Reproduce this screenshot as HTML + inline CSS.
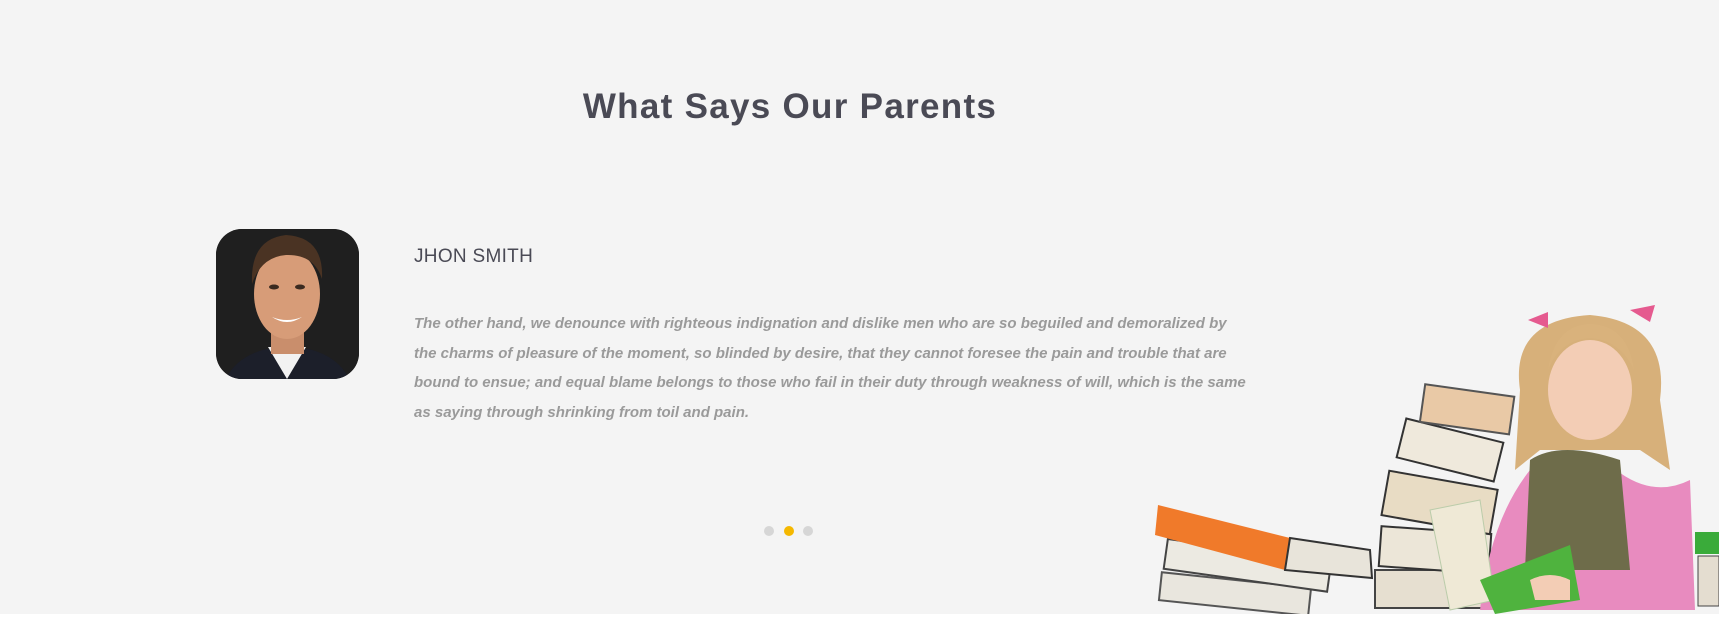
<!DOCTYPE html>
<html><head><style>
html,body{margin:0;padding:0}
body{width:1719px;height:625px;background:#f4f4f4;position:relative;overflow:hidden;font-family:"Liberation Sans",sans-serif}
.bottom{position:absolute;left:0;top:614px;width:1719px;height:11px;background:#fff}
h2{position:absolute;left:0;width:1580px;text-align:center;top:87px;margin:0;font-size:35px;font-weight:bold;color:#4a4a55;letter-spacing:1.3px}
.photo{position:absolute;left:216px;top:229px;width:143px;height:150px;border-radius:26px;background:#222;overflow:hidden}
.name{position:absolute;left:414px;top:246px;font-size:19px;color:#4a4a55;letter-spacing:.3px}
.txt{position:absolute;left:414px;top:309px;font-size:15px;font-style:italic;font-weight:bold;color:#9a9a9a;line-height:29.6px;white-space:nowrap}
.dot{position:absolute;top:526px;width:10px;height:10px;border-radius:50%;background:#d6d6d6}
</style></head><body>
<h2>What Says Our Parents</h2>
<div class="photo">
<svg width="143" height="150" viewBox="0 0 143 150">
<rect width="143" height="150" fill="#1f1f1f"/>
<path d="M10 150 Q20 128 50 120 L93 120 Q123 128 133 150Z" fill="#1c1f2a"/>
<path d="M52 118 L71 150 L90 118Z" fill="#f2f2f2"/>
<rect x="55" y="95" width="33" height="30" fill="#c98e6c"/>
<ellipse cx="71" cy="65" rx="33" ry="45" fill="#d79c78"/>
<path d="M36 55 Q34 10 70 6 Q108 8 106 50 Q98 25 70 26 Q45 28 36 55Z" fill="#4a3323"/>
<path d="M56 88 Q71 98 86 88 Q71 94 56 88Z" fill="#fff"/>
<ellipse cx="58" cy="58" rx="5" ry="2.5" fill="#3a2a20"/>
<ellipse cx="84" cy="58" rx="5" ry="2.5" fill="#3a2a20"/>
</svg>
</div>
<div class="name">JHON SMITH</div>
<div class="txt">The other hand, we denounce with righteous indignation and dislike men who are so beguiled and demoralized by<br>the charms of pleasure of the moment, so blinded by desire, that they cannot foresee the pain and trouble that are<br>bound to ensue; and equal blame belongs to those who fail in their duty through weakness of will, which is the same<br>as saying through shrinking from toil and pain.</div>
<div class="dot" style="left:764px"></div>
<div class="dot" style="left:784px;background:#f5b800"></div>
<div class="dot" style="left:803px"></div>
<svg style="position:absolute;left:1150px;top:300px" width="569" height="314" viewBox="0 0 569 314">
<rect x="10" y="280" width="150" height="28" fill="#e9e6de" stroke="#555" stroke-width="2" transform="rotate(6 85 294)"/>
<rect x="15" y="250" width="165" height="30" fill="#eceae2" stroke="#444" stroke-width="2" transform="rotate(8 95 265)"/>
<polygon points="8,205 140,238 135,270 5,235" fill="#f07a2a"/>
<polygon points="140,238 220,250 222,278 135,270" fill="#e8e4da" stroke="#333" stroke-width="2"/>
<rect x="225" y="270" width="110" height="38" fill="#e6dfd0" stroke="#444" stroke-width="2"/>
<rect x="230" y="230" width="110" height="40" fill="#ece6d8" stroke="#333" stroke-width="2" transform="rotate(4 285 250)"/>
<rect x="235" y="180" width="110" height="45" fill="#e8dcc4" stroke="#333" stroke-width="2" transform="rotate(10 290 200)"/>
<rect x="250" y="130" width="100" height="40" fill="#efe9dc" stroke="#333" stroke-width="2" transform="rotate(14 300 150)"/>
<rect x="272" y="90" width="90" height="38" fill="#e9c9a6" stroke="#555" stroke-width="2" transform="rotate(8 315 110)"/>
<path d="M330 310 Q340 220 380 170 L460 165 Q500 200 540 180 L545 310Z" fill="#e88bbf"/>
<path d="M380 160 Q410 140 470 160 L480 270 L375 270Z" fill="#6e6c4a"/>
<path d="M370 90 Q360 20 440 15 Q520 22 510 100 L520 170 L490 150 L390 150 L365 170Z" fill="#d7b07a"/>
<ellipse cx="440" cy="90" rx="42" ry="50" fill="#f3cdb5"/>
<path d="M398 70 Q405 25 440 24 Q478 25 484 70 Q470 40 440 38 Q410 40 398 70Z" fill="#d9b27c"/>
<path d="M378 20 L398 12 L398 28Z M480 10 L505 5 L500 22Z" fill="#e55a8f"/>
<polygon points="280,210 330,200 345,300 300,310" fill="#efe9d6" stroke="#bca" stroke-width="1"/>
<polygon points="330,280 420,245 430,300 345,314" fill="#4fb33e"/>
<path d="M380 280 Q400 270 420 280 L420 300 L385 300Z" fill="#f3cdb5"/>
<rect x="545" y="232" width="24" height="22" fill="#3aab3a"/>
<rect x="548" y="256" width="21" height="50" fill="#e4ddd0" stroke="#444" stroke-width="1"/>
</svg>
<div class="bottom"></div>
</body></html>
